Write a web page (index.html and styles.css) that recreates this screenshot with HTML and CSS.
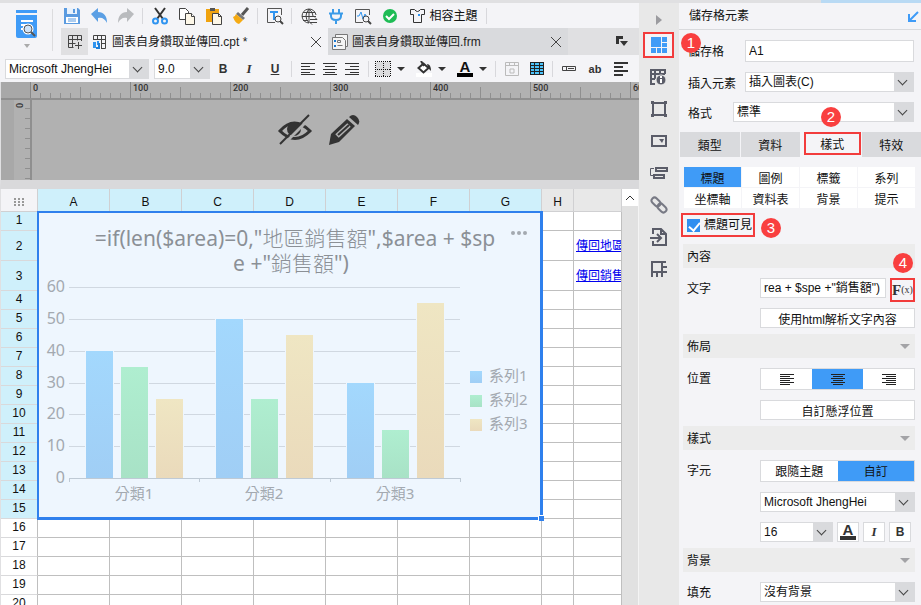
FILE: index.html
```html
<!DOCTYPE html>
<html lang="zh-Hant">
<head>
<meta charset="UTF-8">
<meta name="viewport" content="width=device-width, initial-scale=1.0">
<title>圖表自身鑽取並傳回.cpt</title>
<link rel="stylesheet" href="styles.css">
</head>
<body>
    <div class="topstrip"></div>
    <div class="app">
        <main class="editor">
            <header class="header">
                <button class="logo" aria-label="預覽">
                    <svg width="22" height="40" viewBox="0 0 22 40">
                        <path d="M0 1h21v3H0z" fill="#3f9bf7"/>
                        <path d="M0 6h21v21q0 2-2 2H2q-2 0-2-2z" fill="#3f9bf7"/>
                        <path d="M5 12h12M5 16h5M5 20h3" stroke="#fff" stroke-width="2"/>
                        <circle cx="12" cy="20" r="4.500" fill="#d9ebfd" stroke="#fff" stroke-width="2"/>
                        <circle cx="12" cy="20" r="4" fill="#cfe4fa" stroke="#555" stroke-width="1"/>
                        <path d="M15 23l4 4" stroke="#555" stroke-width="2"/>
                        <path d="M8 35h6l-3 4z" fill="#aaa"/>
                    </svg>
                </button>
                <div class="header-main">
                    <div class="toolbar">
                        <button aria-label="儲存"><svg width="18" height="18" viewBox="0 0 18 18"><path d="M1 1h14l2 2v14H1z" fill="#5b9be0"/><path d="M4 1h10v6H4z" fill="#e9f2fc"/><path d="M10 2h2v4h-2z" fill="#5b9be0"/><path d="M3 10h12v6H3z" fill="#fff"/><path d="M5 12h8M5 14h8" stroke="#5b9be0"/></svg></button>
                        <button aria-label="復原"><svg width="18" height="18" viewBox="0 0 18 18"><path d="M1 7l7-6v4c6 0 9 4 9 11-2-4-5-6-9-5v4z" fill="#5b9fe4"/></svg></button>
                        <button aria-label="重做"><svg width="18" height="18" viewBox="0 0 18 18"><path d="M17 7l-7-6v4c-6 0-9 4-9 11 2-4 5-6 9-5v4z" fill="#b9bbbe"/></svg></button>
                        <span class="sep"></span>
                        <button aria-label="剪下"><svg width="18" height="18" viewBox="0 0 18 18" fill="none"><path d="M4 1l8 11M14 1L6 12" stroke="#333" stroke-width="2"/><circle cx="4.500" cy="14" r="2.500" stroke="#2f94f0" stroke-width="2"/><circle cx="13.500" cy="14" r="2.500" stroke="#2f94f0" stroke-width="2"/></svg></button>
                        <button aria-label="複製"><svg width="18" height="18" viewBox="0 0 18 18" fill="#fff" stroke="#444"><path d="M1.500 1.500h6l3 3v8h-9z"/><path d="M7.500 6.500h6l3 3v8h-9z" fill="#fdf7e8"/><path d="M13.500 6.500v3h3" /></svg></button>
                        <button aria-label="貼上"><svg width="18" height="18" viewBox="0 0 18 18"><path d="M1 2h13v13H1z" fill="#f0a30f"/><path d="M5 1h5v3H5z" fill="#555"/><path d="M7.500 6.500h6l3 3v8h-9z" fill="#fdf7e8" stroke="#444"/><path d="M13.500 6.500v3h3" fill="none" stroke="#444"/></svg></button>
                        <button aria-label="格式刷"><svg width="18" height="18" viewBox="0 0 18 18"><path d="M16 1l-6 7" stroke="#555" stroke-width="3"/><path d="M6 5l7 6-2 2-7-6z" fill="#777"/><path d="M4 7l7 6-4 4q-4-1-6-7 2 0 3-3z" fill="#f5ab14"/></svg></button>
                        <span class="sep"></span>
                        <button aria-label="尋找"><svg width="18" height="18" viewBox="0 0 18 18" fill="none"><path d="M15.500 8V1.500h-14v14H9" stroke="#555"/><path d="M4 5h8M8 5v8" stroke="#2f94f0" stroke-width="2"/><circle cx="12" cy="12" r="3" stroke="#444"/><path d="M14 14l3 3" stroke="#444" stroke-width="2"/></svg></button>
                        <span class="sep"></span>
                        <button aria-label="語言"><svg width="18" height="18" viewBox="0 0 18 18" fill="none" stroke="#444"><path d="M16 8A7 7 0 1 0 9 16M3 5.500h12M2 9.500h14M3 13.500h5M9 2v14M9 2q-6 7 0 14M9 2q4 3 4 7"/><path d="M10 12.500h7l-2-2M17 15.500h-7l2 2"/></svg></button>
                        <button aria-label="連線"><svg width="18" height="18" viewBox="0 0 18 18" fill="none" stroke="#3b9be8"><path d="M6 2v4M12 2v4M2 6.500h14M4 7v2q0 4 5 4t5-4V7M9 13v4" stroke-width="2"/></svg></button>
                        <button aria-label="分析"><svg width="18" height="18" viewBox="0 0 18 18" fill="none"><path d="M15.500 8V2.500h-14v13H9" stroke="#555"/><path d="M3 9h2l2-4 2 7 2-5 1 2" stroke="#2f94f0"/><circle cx="12" cy="12" r="3" stroke="#444"/><path d="M14 14l3 3" stroke="#444" stroke-width="2"/></svg></button>
                        <button aria-label="檢查"><svg width="18" height="18" viewBox="0 0 18 18"><circle cx="9" cy="9" r="7" fill="#1ebc55"/><path d="M5 9l3 3 5-5" fill="none" stroke="#fff" stroke-width="2"/></svg></button>
                        <button class="theme"><svg width="18" height="18" viewBox="0 0 18 18" fill="none" stroke="#333"><path d="M5.500 2.500q3 4 6 0h4v5h-3v8h-8v-8h-3v-5z"/><path d="M9 7h2v2H9z" fill="#2f94f0" stroke="none"/></svg>相容主題</button>
                        <span class="sep"></span>
                    </div>
                    <nav class="tabs">
                        <button class="newtab" aria-label="新增"><svg width="16" height="16" viewBox="0 0 16 16" fill="none" stroke="#444"><path d="M14.500 7V1.500h-13v12h5M1.500 5.500h13M1.500 9.500h7M5.500 1.500v12M10.500 1.500v5M8 11.500h7M11.500 8v7"/></svg></button>
                        <div class="tab active">
                            <svg width="16" height="16" viewBox="0 0 16 16" fill="none" stroke="#444"><path d="M1.500 6V1.500h12v13H9M1.500 5.500h12M5.500 1.500v4M9.500 1.500v13M9.500 9.500h4"/><path d="M1 8h3v6H1zM5 7h2v4H5z" fill="#2f94f0" stroke="none"/><path d="M7 9v5H4" stroke="#1f7fd8" stroke-width="2"/></svg>
                            <a href="#">圖表自身鑽取並傳回.cpt *</a>
                            <button class="close" aria-label="關閉"></button>
                        </div>
                        <div class="tab">
                            <svg width="16" height="16" viewBox="0 0 16 16" fill="#f4f4f4" stroke="#777"><path d="M3.500.5h12v12h-12z"/><path d="M.5 3.500h10l3 3v9H.5z"/><path d="M2 6h2v2H2zM2 11h2v2H2z" fill="#1a78d0" stroke="none"/><path d="M5.500 6.500h3v2h-3zM5.500 11.500h5"/></svg>
                            <a href="#">圖表自身鑽取並傳回.frm</a>
                            <button class="close" aria-label="關閉"></button>
                        </div>
                        <button class="tablist" aria-label="分頁列表"><svg width="12" height="11" viewBox="0 0 12 11"><path d="M0 0h7v3H3v5H0zM4 5h8l-4 5z" fill="#333"/></svg></button>
                    </nav>
                </div>
            </header>

            <div class="format">
                <span class="select font"><select aria-label="字型"><option>Microsoft JhengHei</option></select></span>
                <span class="select size"><select aria-label="字級"><option>9.0</option></select></span>
                <button class="biu"><b>B</b></button>
                <button class="biu"><i>I</i></button>
                <button class="biu"><u>U</u></button>
                <span class="sep"></span>
                <div class="aligns">
                    <button aria-label="靠左"><svg width="14" height="12" viewBox="0 0 14 12" stroke="#333"><path d="M0 .5h14M0 3.500h9M0 6.500h14M0 9.500h9M0 11.500h14"/></svg></button>
                    <button aria-label="置中"><svg width="14" height="12" viewBox="0 0 14 12" stroke="#333"><path d="M0 .5h14M2 3.500h10M0 6.500h14M2 9.500h10M0 11.500h14"/></svg></button>
                    <button aria-label="靠右"><svg width="14" height="12" viewBox="0 0 14 12" stroke="#333"><path d="M0 .5h14M5 3.500h9M0 6.500h14M5 9.500h9M0 11.500h14"/></svg></button>
                </div>
                <span class="sep"></span>
                <div class="drops">
                    <button aria-label="框線"><svg width="16" height="16" viewBox="0 0 16 16" shape-rendering="crispEdges"><path d="M1 1h14v14H1z" fill="#dcdcde"/><path d="M0 .5h16M0 15.500h16M.5 0v16M15.500 0v16M8.500 0v16M0 8.500h16" fill="none" stroke="#111" stroke-dasharray="1 1"/></svg><span class="caret"></span></button>
                    <button aria-label="填色"><svg width="16" height="16" viewBox="0 0 16 16"><path d="M0 12h16v4H0z" fill="#fff"/><path d="M2.500 7l5-4.500 5 4.500-5 4.500z" fill="#fff" stroke="#333" stroke-width="2"/><path d="M5 0l3 5" stroke="#333" stroke-width="2"/><path d="M11 3q4 0 4 7l-3-3z" fill="#333"/></svg><span class="caret"></span></button>
                    <button aria-label="文字顏色"><span class="fontcolor">A</span><span class="caret"></span></button>
                </div>
                <span class="sep"></span>
                <button class="ic25" aria-label="合併"><svg width="14" height="14" viewBox="0 0 14 14" fill="none" stroke="#bbb"><path d="M.5.5h13v13H.5zM.5 3.500h13M4.500.5v3M9.500.5v3M5 7h4v4H5z"/></svg></button>
                <button class="ic25" aria-label="表格"><svg width="14" height="13" viewBox="0 0 14 13"><path d="M0 0h14v13H0z" fill="#222"/><path d="M1 1h3v2H1zM5 1h4v2H5zM10 1h3v2h-3zM1 4h3v2H1zM5 4h4v2H5zM10 4h3v2h-3zM1 7h3v2H1zM5 7h4v2H5zM10 7h3v2h-3zM1 10h3v2H1zM5 10h4v2H5zM10 10h3v2h-3z" fill="#4cc3fa"/></svg></button>
                <span class="sep"></span>
                <button class="biu" aria-label="控件"><svg width="14" height="5" viewBox="0 0 14 5" fill="none" stroke="#444"><path d="M.5.5h13v4H.5zM4.500.5v4M6 2.500h6"/></svg></button>
                <button class="biu ab">ab</button>
                <button class="biu" aria-label="段落"><svg width="14" height="14" viewBox="0 0 14 14" stroke="#333" stroke-width="2"><path d="M0 1h14M0 5h9M0 9h14M0 13h9"/></svg></button>
            </div>

            <section class="canvas">
                <div class="hruler">
                    <span>0</span><span>100</span><span>200</span><span>300</span><span>400</span><span>500</span><span>600</span>
                </div>
                <div class="canvas-body">
                    <div class="vruler"><span>0</span></div>
                    <div class="canvas-tools">
                        <button aria-label="隱藏"><svg width="34" height="32" viewBox="0 0 34 32"><path d="M2 17Q16 1 32 17 17 32 2 17z" fill="none" stroke="#333" stroke-width="3"/><circle cx="16" cy="15" r="7" fill="#333"/><path d="M5 31L34 2" stroke="#b1b1b1" stroke-width="3"/><path d="M2 30L31 1" stroke="#333" stroke-width="2"/></svg></button>
                        <button aria-label="編輯"><svg width="32" height="32" viewBox="0 0 32 32"><path d="M1 31l2-11L19 5l8 7-16 16z" fill="#333"/><path d="M9 22L21 11" stroke="#b1b1b1" stroke-width="5"/><path d="M10 21L21 11" stroke="#333" stroke-width="2"/><path d="M21 3q4-4 8 0t1 8z" fill="#333"/></svg></button>
                    </div>
                </div>
            </section>

            <section class="sheet-wrap">
                <div class="sheet-view">
                    <table class="sheet">
                        <thead>
                            <tr><th class="corner"><svg width="10" height="8" viewBox="0 0 10 8"><path d="M0 0h2v2H0zM4 0h2v2H4zM8 0h2v2H8zM0 3h2v2H0zM4 3h2v2H4zM8 3h2v2H8zM0 6h2v2H0zM4 6h2v2H4zM8 6h2v2H8z" fill="#999"/></svg></th><th class="sel">A</th><th class="sel">B</th><th class="sel">C</th><th class="sel">D</th><th class="sel">E</th><th class="sel">F</th><th class="sel">G</th><th class="narrow">H</th><th class="rest"></th></tr>
                        </thead>
                        <tbody id="rows"></tbody>
                    </table>
                    <div class="chart">
                        <svg id="chart" width="501" height="304" viewBox="39 213 501 304">
                            <defs>
                                <linearGradient id="s0" x2="0" y2="1"><stop stop-color="#a3d8fd"/><stop offset="1" stop-color="#a0cef5"/></linearGradient>
                                <linearGradient id="s1" x2="0" y2="1"><stop stop-color="#afeed0"/><stop offset="1" stop-color="#a8e2c6"/></linearGradient>
                                <linearGradient id="s2" x2="0" y2="1"><stop stop-color="#efe6c3"/><stop offset="1" stop-color="#eadabb"/></linearGradient>
                            </defs>
                            <g class="title">
                                <text x="295" y="246">=if(len($area)=0,"<tspan>地區銷售額</tspan>",$area + $sp</text>
                                <text x="291" y="271">e +"<tspan>銷售額</tspan>")</text>
                            </g>
                            <g fill="#a3a9b0"><circle cx="513" cy="233" r="2"/><circle cx="519" cy="233" r="2"/><circle cx="525" cy="233" r="2"/></g>
                        </svg>
                        <span class="handle"></span>
                    </div>
                </div>
                <div class="scrollbar"><button aria-label="向上捲動"><svg width="10" height="6" viewBox="0 0 10 6"><path d="M1 5l4-4 4 4" fill="none" stroke="#333"/></svg></button></div>
            </section>
        </main>

        <aside class="rail">
            <button aria-label="收合"><svg width="6" height="10" viewBox="0 0 6 10"><path d="M0 0l6 5-6 5z" fill="#9b9b9f"/></svg></button>
            <button class="active" aria-label="儲存格元素"><svg width="16" height="16" viewBox="0 0 16 16" fill="#3f9bf7"><path d="M0 0h10v10H0zM11 0h5v5h-5zM11 6h5v4h-5zM0 11h5v5H0zM6 11h4v5H6zM11 11h5v5h-5z"/></svg></button>
            <button aria-label="儲存格屬性"><svg width="17" height="17" viewBox="0 0 17 17" fill="none" stroke="#5a5c68"><path d="M5 15H1V1h14v4M1 5h14M5 1v9M1 10h4M10 1v4" stroke-width="2"/><circle cx="11" cy="11" r="5" fill="#5a5c68" stroke="#e8e8e8"/><path d="M11 7v2M11 10v4" stroke="#fff" stroke-width="2"/></svg></button>
            <button aria-label="懸浮元素"><svg width="16" height="16" viewBox="0 0 16 16" fill="none" stroke="#5a5c68" stroke-width="2"><path d="M2 2h12v12H2z"/><path d="M0 0h3v3H0zM13 0h3v3h-3zM0 13h3v3H0zM13 13h3v3h-3z" fill="#5a5c68" stroke="none"/></svg></button>
            <button aria-label="控件設定"><svg width="16" height="12" viewBox="0 0 16 12"><path d="M1 1h14v10H1z" fill="none" stroke="#5a5c68" stroke-width="2"/><path d="M8 4h5l-2 4z" fill="#5a5c68"/></svg></button>
            <button aria-label="條件屬性"><svg width="18" height="14" viewBox="0 0 18 14" fill="none" stroke="#5a5c68"><path d="M4 2.500H.5v7H4"/><path d="M6 2h11v3H6zM4 9h10v3H4z" stroke-width="2"/></svg></button>
            <button aria-label="超連結"><svg width="18" height="18" viewBox="0 0 18 18" fill="none" stroke="#777984" stroke-width="2"><rect x="1" y="3" width="10" height="6" rx="3" transform="rotate(45 6 6)"/><rect x="7" y="9" width="10" height="6" rx="3" transform="rotate(45 12 12)"/></svg></button>
            <button aria-label="匯入"><svg width="18" height="18" viewBox="0 0 18 18" fill="none" stroke="#5a5c68" stroke-width="2"><path d="M3 6V1h8l5 5v11H3v-4M0 10h10M7 6l4 4-4 4M11 1v5h5"/></svg></button>
            <button aria-label="框架"><svg width="16" height="16" viewBox="0 0 16 16" fill="none" stroke="#5a5c68" stroke-width="2"><path d="M1 16V1h14M1 11h15M11 1v15M11 6h5M6 11v5"/></svg></button>
            <span class="badge badge-1">1</span>
        </aside>

        <aside class="panel">
            <h1>儲存格元素<svg width="11" height="11" viewBox="0 0 11 11" fill="none" stroke="#3f9bf7" stroke-width="2"><path d="M10 1L2 9M1 3v7h7"/></svg></h1>
            <div class="basic">
                <div class="row tall"><label for="cell">儲存格</label><input id="cell" type="text" value="A1"></div>
                <div class="row"><label for="insert">插入元素</label><span class="select"><select id="insert"><option>插入圖表(C)</option></select></span></div>
                <div class="row tight"><label for="fmt">格式</label><span class="select"><select id="fmt"><option>標準</option></select></span></div>
                <span class="badge badge-2">2</span>
            </div>
            <div class="ptabs">
                <button>類型</button><button>資料</button><button class="active">樣式</button><button>特效</button>
            </div>
            <div class="parts">
                <button class="on">標題</button><button>圖例</button><button>標籤</button><button>系列</button>
                <button>坐標軸</button><button>資料表</button><button>背景</button><button>提示</button>
            </div>
            <div class="visible">
                <label><input type="checkbox" checked>標題可見</label>
                <span class="badge badge-3">3</span>
            </div>

            <h2 class="plain">內容<span class="badge badge-4">4</span></h2>
            <div class="props">
                <div class="row"><label for="txt">文字</label><input id="txt" type="text" value='rea + $spe +"銷售額")'><button class="fx">F<small>(x)</small></button></div>
                <div class="row"><span class="label"></span><button class="wide">使用html解析文字內容</button></div>
            </div>

            <h2>佈局</h2>
            <div class="props">
                <div class="row tall"><span class="label">位置</span>
                    <div class="segment">
                        <button aria-label="靠左"><svg width="14" height="12" viewBox="0 0 14 12" stroke="#222"><path d="M0 .5h14M0 2.500h10M0 4.500h14M0 6.500h10M0 8.500h14M0 10.500h10"/></svg></button>
                        <button class="on" aria-label="置中"><svg width="14" height="12" viewBox="0 0 14 12" stroke="#222"><path d="M0 .5h14M2 2.500h10M0 4.500h14M2 6.500h10M0 8.500h14M2 10.500h10"/></svg></button>
                        <button aria-label="靠右"><svg width="14" height="12" viewBox="0 0 14 12" stroke="#222"><path d="M0 .5h14M4 2.500h10M0 4.500h14M4 6.500h10M0 8.500h14M4 10.500h10"/></svg></button>
                    </div>
                </div>
                <div class="row"><span class="label"></span><button class="wide">自訂懸浮位置</button></div>
            </div>

            <h2>樣式</h2>
            <div class="props">
                <div class="row tall"><span class="label">字元</span>
                    <div class="segment"><button>跟隨主題</button><button class="on">自訂</button></div>
                </div>
                <div class="row"><span class="label"></span><span class="select"><select aria-label="字型"><option>Microsoft JhengHei</option></select></span></div>
                <div class="row chars"><span class="label"></span><span class="select"><select aria-label="字級"><option>16</option></select></span><button><span class="fontcolor">A</span></button><button><i>I</i></button><button><b>B</b></button></div>
            </div>

            <h2>背景</h2>
            <div class="props">
                <div class="row"><label for="fill">填充</label><span class="select"><select id="fill"><option>沒有背景</option></select></span></div>
            </div>
        </aside>
    </div>

    <script>
        // sheet rows
        var links = { 2: '傳回地區', 3: '傳回銷售' };
        var html = '';
        for (var r = 1; r <= 20; r++) {
            var cls = (r <= 15 ? 'sel' : '') + (links[r] ? ' high' : '');
            html += '<tr class="' + cls + '"><th>' + r + '</th>';
            for (var c = 0; c < 8; c++) {
                html += '<td></td>';
            }
            html += '<td>' + (links[r] ? '<a href="#">' + links[r] + '</a>' : '') + '</td></tr>';
        }
        document.getElementById('rows').innerHTML = html;

        // bar chart
        var data = [[40, 35, 25], [50, 25, 45], [30, 15, 55]];
        var base = 478, unit = 3.18, left = 69, group = 130.3;
        var svg = '';
        for (var v = 0; v <= 60; v += 10) {
            var y = Math.round(base - v * unit);
            svg += '<rect class="' + (v ? 'grid' : 'axis') + '" x="' + left + '" y="' + y + '" width="391" height="1"/>';
            svg += '<text class="tick" x="65" y="' + (y + 5) + '">' + v + '</text>';
        }
        data.forEach(function(values, i) {
            var x = Math.round(left + i * group);
            svg += '<rect class="axis" x="' + x + '" y="478" width="1" height="4"/>';
            values.forEach(function(value, k) {
                var top = Math.round(base - value * unit);
                var bx = x + 17 + k * 35;
                svg += '<rect x="' + (bx - 1) + '" y="' + top + '" width="29" height="' + (base - top) + '" fill="#eef6fe"/>';
                svg += '<rect x="' + bx + '" y="' + top + '" width="27" height="' + (base - top) + '" fill="url(#s' + k + ')"/>';
            });
            svg += '<text class="cat" x="' + (x + 65) + '" y="499">分類' + (i + 1) + '</text>';
            svg += '<rect x="470" y="' + (371 + i * 24) + '" width="12" height="12" fill="url(#s' + i + ')"/>';
            svg += '<text class="name" x="489" y="' + (381 + i * 24) + '">系列' + (i + 1) + '</text>';
        });
        svg += '<rect class="axis" x="460" y="478" width="1" height="4"/>';
        document.getElementById('chart').insertAdjacentHTML('beforeend', svg);
    </script>
</body>
</html>
```

FILE: styles.css
```css
* {
    box-sizing: border-box;
}
body {
    margin: 0;
    height: 100vh;
    display: flex;
    flex-direction: column;
    overflow: hidden;
    background: #f4f4f7;
    color: #111;
    font: 12px/16px "Liberation Sans", "Noto Sans CJK TC", sans-serif;
}
button, input, select {
    font: inherit;
    color: inherit;
    margin: 0;
    padding: 0;
    border: 0;
    border-radius: 0;
    background: none;
}
button {
    display: flex;
    align-items: center;
    justify-content: center;
    white-space: nowrap;
}
svg {
    display: block;
    flex: none;
}
.topstrip {
    height: 3px;
    flex: none;
    background: linear-gradient(to left, #b9daf4 100px, #e0e0e2 100px);
}
.app {
    flex: 1;
    min-height: 0;
    display: flex;
}
.editor {
    flex: 1;
    min-width: 0;
    display: flex;
    flex-direction: column;
    overflow: hidden;
}

/* header */
.header {
    display: flex;
    height: 52px;
    flex: none;
}
.logo {
    width: 58px;
    align-items: flex-start;
    padding: 6px 5px 0 0;
    background: linear-gradient(#dcdcde, #dcdcde) 52px 6px / 1px 42px no-repeat;
}
.header-main {
    flex: 1;
    min-width: 0;
}
.toolbar {
    display: flex;
    height: 25px;
}
.toolbar button {
    width: 27px;
}
.toolbar .theme {
    width: 77px;
    gap: 2px;
    margin-right: 3px;
    padding-left: 4px;
}
.sep {
    flex: none;
    width: 7px;
    background: linear-gradient(#d8d8dc, #d8d8dc) 3px center / 1px 16px no-repeat;
}
.tabs {
    display: flex;
    height: 27px;
    margin-left: 3px;
    background: #e0e0e2;
}
.newtab {
    width: 27px;
}
.tab {
    display: flex;
    align-items: center;
    gap: 4px;
    width: 240px;
    padding: 0 7px 0 4px;
    background: #d9dadd;
}
.tab.active {
    background: #f4f4f7;
}
.tab a {
    flex: 1;
    color: #222;
    text-decoration: none;
    white-space: nowrap;
}
.close {
    width: 10px;
    height: 10px;
    background:
        linear-gradient(45deg, transparent 46%, #444 46%, #444 54%, transparent 54%),
        linear-gradient(-45deg, transparent 46%, #444 46%, #444 54%, transparent 54%);
}
.tablist {
    margin-left: auto;
    width: 35px;
}

/* format bar */
.format {
    display: flex;
    height: 27px;
    flex: none;
    padding: 0 5px;
}
.select {
    position: relative;
    display: flex;
    height: 20px;
    min-width: 0;
    border: 1px solid #d9dadd;
    background: linear-gradient(to left, #d9dadd 19px, #fff 19px);
}
.select::after {
    content: "";
    position: absolute;
    right: 7px;
    top: 4px;
    width: 6px;
    height: 6px;
    border: solid #444;
    border-width: 0 1px 1px 0;
    transform: rotate(45deg);
    pointer-events: none;
}
.select select {
    flex: 1;
    min-width: 0;
    padding: 0 20px 0 3px;
    appearance: none;
    outline: none;
}
.format .select {
    flex: none;
    margin-top: 4px;
}
.font {
    width: 144px;
    margin-right: 5px;
}
.size {
    width: 56px;
}
.biu {
    flex: none;
    width: 26px;
    color: #333;
}
.biu i, .chars i {
    font-family: "Liberation Serif", serif;
    font-weight: bold;
    font-size: 13px;
}
.biu u {
    font-weight: bold;
}
.ab {
    font-weight: bold;
    font-size: 11px;
}
.aligns {
    display: flex;
    padding: 0 2px;
}
.aligns button {
    width: 22px;
}
.drops {
    display: flex;
    gap: 11px;
    padding: 0 5px 0 3px;
}
.drops button {
    gap: 6px;
}
.caret {
    border: solid transparent;
    border-width: 4px 4px 0;
    border-top-color: #333;
    width: 7px;
}
.fontcolor {
    width: 16px;
    height: 16px;
    border-bottom: 4px solid #000;
    font: bold 15px/12px "Liberation Sans", sans-serif;
    text-align: center;
}
.ic25 {
    width: 25px;
    flex: none;
}

/* ruler and canvas */
.canvas {
    height: 107px;
    flex: none;
    display: flex;
    flex-direction: column;
    border-left: 1px solid #e0e0e2;
    border-bottom: 9px solid #d9d9db;
    background: #b1b1b1;
}
.hruler {
    display: flex;
    height: 18px;
    padding-left: 29px;
    border-bottom: 2px solid #8f8f8f;
    background: linear-gradient(to right, #a8a8a8 29px, #b1b1b1 29px);
    overflow: hidden;
}
.hruler span {
    flex: none;
    width: 100px;
    padding-left: 3px;
    color: #333;
    font: 500 9px/13px Roboto, sans-serif;
    background:
        linear-gradient(#888, #888) 0 0 / 1px 16px no-repeat,
        linear-gradient(#8f8f8f, #8f8f8f) 50px 5px / 1px 11px no-repeat,
        repeating-linear-gradient(to right, #8f8f8f 0 1px, transparent 1px 10px) 0 11px / 100% 5px no-repeat;
}
.canvas-body {
    flex: 1;
    display: flex;
}
.vruler {
    width: 31px;
    border-left: 13px solid #a8a8a8;
    border-right: 2px solid #8f8f8f;
    background: repeating-linear-gradient(to bottom, transparent 0 8px, #8f8f8f 8px 9px, transparent 9px 10px) right / 5px 100% no-repeat;
}
.vruler span {
    display: block;
    width: 12px;
    height: 8px;
    color: #333;
    font: 500 9px/12px Roboto, sans-serif;
    writing-mode: vertical-rl;
    transform: rotate(180deg);
}
.canvas-tools {
    flex: 1;
    display: flex;
    justify-content: center;
    gap: 16px;
    align-items: flex-start;
    padding: 14px 34px 0 0;
}

/* sheet */
.sheet-wrap {
    flex: 1;
    min-height: 0;
    display: flex;
    background: #fff;
}
.sheet-view {
    position: relative;
    flex: 1;
    min-width: 0;
    overflow: hidden;
}
.sheet {
    width: 100%;
    table-layout: fixed;
    border-collapse: separate;
    border-spacing: 0;
    border-left: 1px solid #e0e0e2;
}
.sheet th, .sheet td {
    height: 19px;
    padding: 0;
    border: solid #bfbfbf;
    border-width: 0 1px 1px 0;
    line-height: 16px;
    overflow: hidden;
    white-space: nowrap;
}
.sheet th {
    font-weight: normal;
    border-bottom-color: #d9d9db;
    vertical-align: top;
}
.sheet thead th {
    width: 72px;
    height: 23px;
    padding-top: 4px;
    vertical-align: middle;
    background: #e8e8e8;
    border-color: #d0d0d2;
}
.sheet thead th.corner {
    width: 37px;
    background: #f4f4f7;
}
.corner svg {
    margin: 0 auto;
}
.sheet thead th.narrow {
    width: 32px;
}
.sheet thead th.rest {
    width: auto;
}
.sheet thead th.sel, .sheet tr.sel th {
    background: #cff0fb;
}
.sheet tr.high th, .sheet tr.high td {
    height: 30px;
    vertical-align: middle;
}
.sheet a {
    padding-left: 2px;
    color: #0000ee;
}
.chart {
    position: absolute;
    left: 37px;
    top: 22px;
    border: solid #2f80ed;
    border-width: 2px 3px 3px 2px;
    background: #eef6fe;
}
.handle {
    position: absolute;
    right: -4px;
    bottom: -4px;
    width: 6px;
    height: 6px;
    border: solid #fff;
    border-width: 1px 0 0 1px;
    background: #2f80ed;
}
.chart text {
    font-family: "Noto Sans", "Noto Sans CJK TC", sans-serif;
    font-size: 15px;
    fill: #a3a9b0;
}
.chart .title text {
    font-size: 21px;
    fill: #8b9096;
    text-anchor: middle;
}
.title tspan {
    font-weight: 300;
}
.chart .tick {
    font-size: 16px;
    text-anchor: end;
}
.chart .cat {
    text-anchor: middle;
}
.grid {
    fill: #d0d8e1;
}
.axis {
    fill: #bfcad5;
}
.scrollbar {
    width: 17px;
    background: #e1e1e1;
    border-right: 1px solid #f4f4f4;
}
.scrollbar button {
    width: 16px;
    height: 17px;
    background: #fff;
}

/* icon rail */
.rail {
    position: relative;
    flex: none;
    width: 40px;
    padding: 1px 5px 0 4px;
    background: #e8e8e8;
}
.rail button {
    width: 31px;
    height: 26px;
    margin: 0 0 6px;
}
.rail button:first-child {
    height: 28px;
    margin-bottom: 0;
    padding-top: 4px;
}
.rail .active {
    border: 2px solid #f23c3c;
    background: #f4f4f7;
}
.badge {
    position: absolute;
    z-index: 2;
    width: 20px;
    height: 20px;
    border-radius: 50%;
    background: #f93f3f;
    color: #fff;
    font-size: 15px;
    line-height: 20px;
    text-align: center;
}
.badge-1 {
    left: 42px;
    top: 30px;
}
.badge-2 {
    left: 142px;
    bottom: 5px;
}
.badge-3 {
    left: 82px;
    top: 5px;
}
.badge-4 {
    right: 2px;
    top: 9px;
}

/* property panel */
.panel {
    flex: none;
    width: 242px;
    overflow: hidden;
}
.panel h1 {
    display: flex;
    justify-content: space-between;
    align-items: center;
    height: 27px;
    margin: 0;
    padding: 0 2px 0 10px;
    border-bottom: 1px solid #d9dadd;
    font-size: 12px;
    font-weight: normal;
}
.basic {
    position: relative;
    display: flex;
    flex-direction: column;
    gap: 10px;
    padding: 10px 7px 10px 9px;
}
.row {
    display: flex;
    height: 20px;
    align-items: stretch;
}
.row.tall {
    height: 22px;
}
.row label, .row .label {
    flex: none;
    line-height: 22px;
}
.basic label {
    width: 57px;
    line-height: 24px;
}
.basic .tight label {
    width: 45px;
}
.row .select, .row input, .wide, .segment {
    flex: 1;
    min-width: 0;
}
.row input, .wide, .segment {
    border: 1px solid #d9dadd;
    background: #fff;
    padding: 0 3px;
}
.wide {
    padding-top: 3px;
}
.ptabs {
    display: grid;
    grid-template-columns: repeat(4, 1fr);
    gap: 1px;
    height: 25px;
    padding-left: 1px;
}
.ptabs button {
    padding-top: 3px;
    background: #d9dadd;
}
.ptabs .active {
    margin: 0 0 2px 3px;
    border: 2px solid #f23c3c;
    background: #f4f4f7;
}
.parts {
    display: grid;
    grid-template-columns: repeat(4, 1fr);
    grid-auto-rows: 20px;
    gap: 1px;
    margin: 10px 6px 5px 5px;
}
.parts button {
    padding-top: 4px;
    background: #fff;
}
.parts .on, .segment .on {
    background: #3f9bf7;
}
.visible {
    position: relative;
    padding-left: 2px;
}
.visible label {
    display: inline-flex;
    align-items: center;
    gap: 4px;
    width: 74px;
    height: 24px;
    padding-left: 4px;
    border: 2px solid #f23c3c;
    vertical-align: top;
    white-space: nowrap;
}
.visible input {
    appearance: none;
    position: relative;
    width: 13px;
    height: 13px;
    flex: none;
    background: #2f8ff0;
}
.visible input:checked::after {
    content: "";
    position: absolute;
    left: 4px;
    top: 1px;
    width: 5px;
    height: 9px;
    border: solid #fff;
    border-width: 0 2px 2px 0;
    transform: rotate(40deg);
}
.panel h2 {
    position: relative;
    height: 24px;
    margin: 6px 6px 0 4px;
    padding: 1px 4px;
    background: #ececec;
    font-size: 12px;
    line-height: 24px;
    font-weight: normal;
}
.panel h2::after {
    content: "";
    position: absolute;
    right: 5px;
    top: 10px;
    border: solid transparent;
    border-width: 5px 5px 0;
    border-top-color: #a3a3a6;
}
.panel h2.plain::after {
    display: none;
}
.panel .plain {
    margin-top: 7px;
}
.props {
    display: flex;
    flex-direction: column;
    gap: 10px;
    padding: 10px 6px 0 8px;
}
.props label, .props .label {
    width: 73px;
}
.fx {
    width: 25px;
    height: 24px;
    margin-left: 4px;
    border: 2px solid #f23c3c;
    color: #333;
    font: bold 15px/16px "Liberation Serif", serif;
}
.fx small {
    font-size: 10px;
    font-weight: normal;
}
.segment {
    display: flex;
    padding: 0;
}
.segment button {
    flex: 1;
    padding-top: 2px;
}
.chars {
    gap: 4px;
}
.chars .label {
    margin-right: -4px;
}
.chars .select {
    flex: none;
    width: 73px;
}
.chars button {
    width: 22px;
    border: 1px solid #d9dadd;
    background: #fff;
    color: #333;
}
.chars .fontcolor {
    border-color: #333;
}
```
